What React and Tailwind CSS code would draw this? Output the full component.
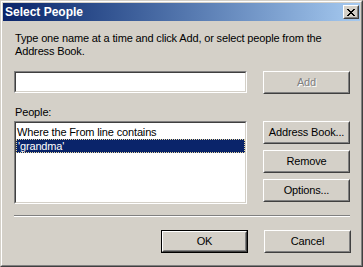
import React from "react";

const font = { fontFamily: '"Liberation Sans", Arial, sans-serif' };

function Button({ children, isDefault, disabled, className = "" }) {
    const inner = (
        <div className="h-full border border-t-white border-l-white border-r-[#404040] border-b-[#404040]">
            <div className="h-full flex items-center justify-center border border-t-[#d4d0c8] border-l-[#d4d0c8] border-r-[#808080] border-b-[#808080]">
                {disabled ? (
                    <span className="text-[#808080] [text-shadow:1px_1px_0_#ffffff]">{children}</span>
                ) : (
                    <span className="text-black">{children}</span>
                )}
            </div>
        </div>
    );
    if (isDefault) {
        return <div className={`border border-black ${className}`}>{inner}</div>;
    }
    return <div className={className}>{inner}</div>;
}

function Sunken({ children, className = "" }) {
    return (
        <div className={`border border-t-[#808080] border-l-[#808080] border-r-white border-b-white ${className}`}>
            <div className="h-full bg-white border border-t-[#404040] border-l-[#404040] border-r-[#d4d0c8] border-b-[#d4d0c8]">
                {children}
            </div>
        </div>
    );
}

export default function App() {
    return (
        <div className="w-[363px] h-[267px] bg-[#d4d0c8] text-[11px] leading-[13px] tracking-[-0.15px] border border-t-[#d4d0c8] border-l-[#d4d0c8] border-r-[#404040] border-b-[#404040]" style={font}>
            <div className="h-full flex flex-col p-px border border-t-white border-l-white border-r-[#808080] border-b-[#808080]">
                {/* Title bar */}
                <div className="h-[18px] flex items-center justify-between pl-[2px] pr-[1px] bg-gradient-to-r from-[#0a246a] to-[#a6caf0]">
                    <span className="text-white font-bold text-[12px] tracking-normal">Select People</span>
                    <div className="w-[16px] h-[14px] border border-t-white border-l-white border-r-[#404040] border-b-[#404040] bg-[#d4d0c8]">
                        <div className="h-full flex items-center justify-center border border-t-[#d4d0c8] border-l-[#d4d0c8] border-r-[#808080] border-b-[#808080]">
                            <svg width="8" height="7" viewBox="0 0 8 7" shapeRendering="crispEdges">
                                <path d="M0 0h2v1h-2zM6 0h2v1h-2zM1 1h2v1h-2zM5 1h2v1h-2zM2 2h4v1h-4zM3 3h2v1h-2zM2 4h4v1h-4zM1 5h2v1h-2zM5 5h2v1h-2zM0 6h2v1h-2zM6 6h2v1h-2z" fill="#000" />
                            </svg>
                        </div>
                    </div>
                </div>

                {/* Body */}
                <div className="flex-1 flex flex-col pl-[11px] pr-[9px]">
                    <p className="mt-[11px] pl-px text-black">
                        Type one name at a time and click Add, or select people from the<br />
                        Address Book.
                    </p>

                    <div className="mt-[13px] flex gap-[16px]">
                        <Sunken className="w-[233px] h-[22px]" />
                        <Button disabled className="w-[87px] h-[23px]">Add</Button>
                    </div>

                    <div className="flex gap-[16px]">
                        <div className="w-[233px] flex flex-col">
                            <div className="mt-[12px] pl-px h-[13px] text-black">People:</div>
                            <Sunken className="mt-[2px] h-[83px]">
                                <div className="pt-[2px] text-black">
                                    <div className="h-[14px] pl-px flex items-center">Where the From line contains</div>
                                    <div className="h-[14px] pl-px flex items-center bg-[#0a246a] text-white border border-dotted border-[#e8d8a0]">'grandma'</div>
                                </div>
                            </Sunken>
                        </div>
                        <div className="w-[87px] flex flex-col gap-[6px] pt-[27px]">
                            <Button className="h-[23px]">Address Book...</Button>
                            <Button className="h-[23px]">Remove</Button>
                            <Button className="h-[23px]">Options...</Button>
                        </div>
                    </div>

                    <div className="mt-[11px] w-[336px] border-t border-t-[#808080] border-b border-b-white" />

                    <div className="mt-[13px] flex justify-end gap-[16px]">
                        <Button isDefault className="w-[87px] h-[23px]">OK</Button>
                        <Button className="w-[87px] h-[23px]">Cancel</Button>
                    </div>
                </div>
            </div>
        </div>
    );
}
